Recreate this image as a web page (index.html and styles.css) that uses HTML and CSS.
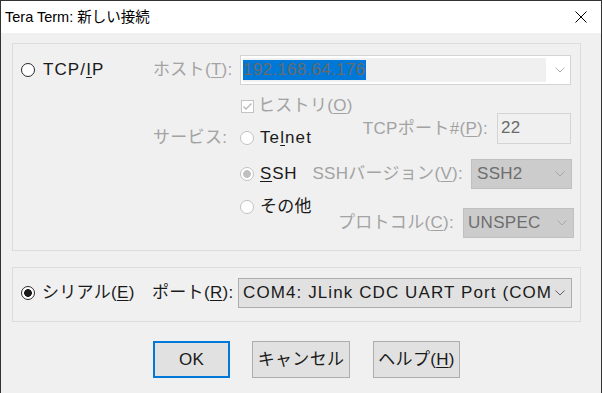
FILE: index.html
```html
<!DOCTYPE html>
<html lang="ja">
<head>
<meta charset="utf-8">
<title>Tera Term: 新しい接続</title>
<link rel="stylesheet" href="styles.css">
</head>
<body>
<div class="window">
  <div class="titlebar">
    <span class="title">Tera Term: 新しい接続</span>
    <svg class="close" width="12" height="12" viewBox="0 0 12 12"><path d="M0.5 0.5 L11.5 11.5 M11.5 0.5 L0.5 11.5" stroke="#000" stroke-width="1" fill="none"/></svg>
  </div>
  <div class="client">
    <div class="group g1">
      <div class="row-a">
        <div class="opt col-radio"><span class="radio"></span><span class="lat-wide">TCP/<u>I</u>P</span></div>
        <div class="lbl dis col-lbl">ホスト(<u>T</u>):</div>
        <div class="combo host">
          <div class="edit"><span class="sel">192.168.64.176</span></div>
          <div class="arrow-cell"><svg class="chev" width="10" height="6" viewBox="0 0 10 6"><path d="M0.5 0.5 L5 5 L9.5 0.5" stroke="#b0b0b0" fill="none"/></svg></div>
        </div>
      </div>
      <div class="rest">
        <div class="svc-col"><div class="lbl dis">サービス:</div></div>
        <div class="opts">
          <div class="opt dis chk-row"><svg class="check" width="13" height="13" viewBox="0 0 13 13"><rect x="0.5" y="0.5" width="12" height="12" fill="#fff" stroke="#c4c4c4"/><path d="M2.5 6.5 L5 9 L10.5 3.5" stroke="#b8b8b8" stroke-width="1.3" fill="none"/></svg><span>ヒストリ(<u>O</u>)</span></div>
          <div class="opt telnet"><span class="radio off"></span><span class="lat-wide">Te<u>l</u>net</span></div>
          <div class="opt ssh"><span class="radio off dot"></span><span class="lat-mid"><u>S</u>SH</span></div>
          <div class="opt other"><span class="radio off"></span><span>その他</span></div>
        </div>
        <div class="fields">
          <div class="field f-port"><span class="lbl dis">TCPポート#(<u>P</u>):</span><div class="editbox">22</div></div>
          <div class="field f-ver"><span class="lbl dis">SSHバージョン(<u>V</u>):</span><div class="dd dd-ver"><span class="dd-text">SSH2</span><svg class="chev" width="10" height="6" viewBox="0 0 10 6"><path d="M0.5 0.5 L5 5 L9.5 0.5" stroke="#a8a8a8" fill="none"/></svg></div></div>
          <div class="field f-proto"><span class="lbl dis">プロトコル(<u>C</u>):</span><div class="dd dd-proto"><span class="dd-text">UNSPEC</span><svg class="chev" width="10" height="6" viewBox="0 0 10 6"><path d="M0.5 0.5 L5 5 L9.5 0.5" stroke="#a8a8a8" fill="none"/></svg></div></div>
        </div>
      </div>
    </div>
    <div class="group g2">
      <div class="row-s">
        <div class="opt col-radio2"><span class="radio dot-dark"></span><span>シリアル(<u>E</u>)</span></div>
        <div class="lbl col-lbl2">ポート(<u>R</u>):</div>
        <div class="com">
          <span class="com-text lat-wide">COM4: JLink CDC UART Port (COM4)</span>
          <svg class="chev" width="10" height="6" viewBox="0 0 10 6"><path d="M0.5 0.5 L5 5 L9.5 0.5" stroke="#606060" fill="none"/></svg>
        </div>
      </div>
    </div>
    <div class="buttons">
      <div class="btn ok">OK</div>
      <div class="btn cancel">キャンセル</div>
      <div class="btn help">ヘルプ(<u>H</u>)</div>
    </div>
  </div>
</div>
</body>
</html>
```
FILE: styles.css
```css
* { box-sizing: border-box; }
body {
  margin: 0;
  font-family: "Liberation Sans", "Noto Sans CJK JP", sans-serif;
  font-size: 17px;
  letter-spacing: 0.3px;
  line-height: 20px;
  color: #1a1a1a;
  background: #f0f0f0;
}
u { text-decoration: underline; text-underline-offset: 2px; text-decoration-thickness: 1px; }
.lat-wide { letter-spacing: 1.1px; }
.lat-mid { letter-spacing: 0.8px; }
.window {
  width: 602px;
  height: 393px;
  border: 1px solid #333;
  border-bottom: none;
  display: flex;
  flex-direction: column;
  background: #f0f0f0;
  overflow: hidden;
}
.titlebar {
  height: 32px;
  flex: none;
  background: #fff;
  display: flex;
  align-items: center;
  padding-left: 4px;
}
.title {
  flex: 1;
  font-size: 14.5px;
  letter-spacing: 0;
  color: #000;
}
.close { margin-right: 14px; display: block; }
.client { flex: 1; padding: 10px 0 0 11px; }
.group {
  width: 569px;
  border: 1px solid #dcdcdc;
}
.g1 { height: 208px; }
.g2 { height: 55px; margin-top: 16px; }

.opt { display: flex; align-items: center; height: 20px; white-space: nowrap; }
.dis { color: #a3a3a3; }
.lbl { white-space: nowrap; }

.radio {
  width: 14px;
  height: 14px;
  border-radius: 50%;
  border: 1px solid #2a2a2a;
  background: #fff;
  margin-right: 8px;
  flex: none;
}
.radio.off { border-color: #c2c2c2; margin-right: 6px; }
.radio.dot { background: radial-gradient(circle, #c0c0c0 0, #c0c0c0 3.6px, #fff 4.1px); }
.radio.dot-dark { background: radial-gradient(circle, #1a1a1a 0, #1a1a1a 3.6px, #fff 4.1px); margin-right: 7px; }

.row-a { display: flex; align-items: center; height: 30px; margin-top: 11px; }
.col-radio { width: 140px; padding-left: 8px; flex: none; }
.col-lbl { width: 87px; flex: none; }
.combo.host {
  width: 331px;
  height: 30px;
  border: 1px solid #d4d4d4;
  background: #fff;
  padding: 2px;
  display: flex;
  flex: none;
}
.edit {
  width: 303px;
  height: 24px;
  background: #f0f0f0;
  padding-top: 2px;
}
.sel {
  display: inline-block;
  background: #0078d7;
  color: #6a6a6a;
  height: 20px;
  padding-right: 1px;
}
.arrow-cell { flex: 1; display: flex; align-items: center; justify-content: flex-end; padding-right: 3px; }
.chev { display: block; flex: none; }

.rest { display: flex; }
.svc-col { width: 227px; flex: none; padding-left: 140px; margin-top: 43px; }
.opts { display: flex; flex-direction: column; flex: none; width: 60px; }
.chk-row { margin-top: 11px; }
.check { margin-left: 1px; margin-right: 4px; flex: none; display: block; }
.telnet { margin-top: 12px; }
.ssh { margin-top: 16px; }
.other { margin-top: 13px; }

.fields { flex: 1; min-width: 0; display: flex; flex-direction: column; align-items: flex-end; }
.field { display: flex; align-items: center; flex: none; }
.f-port { margin-top: 28px; margin-right: 9px; }
.f-ver { margin-top: 15px; margin-right: 8px; }
.f-proto { margin-top: 19px; margin-right: 6px; }
.f-port .lbl { margin-right: 9px; }
.f-ver .lbl { margin-right: 8px; }
.f-proto .lbl { margin-right: 9px; }
.editbox {
  width: 74px;
  height: 31px;
  border: 1px solid #d4d4d4;
  background: #f0f0f0;
  color: #6a6a6a;
  padding: 4px 0 0 3px;
  flex: none;
}
.dd {
  height: 30px;
  background: #cccccc;
  border: 1px solid #c0c0c0;
  display: flex;
  align-items: center;
  padding: 0 6px 0 5px;
  color: #6e6e6e;
  flex: none;
}
.dd-text { flex: 1; }
.dd-ver { width: 101px; }
.dd-proto { width: 111px; padding-left: 4px; }

.row-s { display: flex; align-items: center; height: 30px; margin-top: 10px; }
.col-radio2 { width: 139px; padding-left: 8px; flex: none; }
.col-lbl2 { width: 86px; flex: none; }
.com {
  width: 334px;
  height: 30px;
  background: #e1e1e1;
  border: 1px solid #adadad;
  display: flex;
  align-items: center;
  padding: 0 6px 0 4px;
  flex: none;
}
.com-text { width: 308px; overflow: hidden; white-space: nowrap; flex: none; }
.com .chev { margin-left: auto; }

.buttons { display: flex; margin-top: 19px; margin-left: 141px; }
.btn {
  height: 37px;
  background: #e1e1e1;
  border: 1px solid #adadad;
  display: flex;
  align-items: center;
  justify-content: center;
  white-space: nowrap;
  flex: none;
}
.ok { width: 77px; border: 2px solid #0078d7; }
.cancel { width: 98px; margin-left: 22px; }
.help { width: 87px; margin-left: 23px; }
```
